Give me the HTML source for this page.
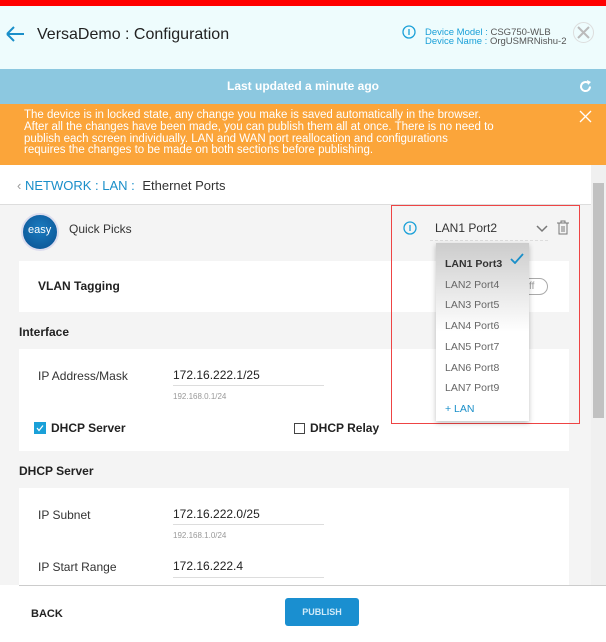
<!DOCTYPE html>
<html><head><style>
*{margin:0;padding:0;box-sizing:border-box}
body{width:606px;height:642px;overflow:hidden;font-family:"Liberation Sans",sans-serif;background:#fff;position:relative}
.a{position:absolute}
</style></head><body>
<div class="a" style="left:0;top:0;width:606px;height:6px;background:#f00"></div>
<div class="a" style="left:0;top:6px;width:606px;height:63px;background:#eefcfd"></div>
<svg class="a" style="left:5px;top:26px" width="20" height="16"><path d="M2 8H19M2 8L9 1M2 8L9 15" stroke="#1a8fc9" stroke-width="2" fill="none"/></svg>
<div class="a" style="left:37px;top:26px;font-size:16px;color:#222">VersaDemo : Configuration</div>
<svg class="a" style="left:402px;top:25px" width="14" height="14"><circle cx="7" cy="7" r="6" stroke="#1aa0d8" stroke-width="1.3" fill="none"/><path d="M7 4V10" stroke="#1aa0d8" stroke-width="1.3"/></svg>
<div class="a" style="left:425px;top:28px;font-size:9.5px;line-height:9px;color:#1aa0d8">Device Model : <span style="color:#555">CSG750-WLB</span><br>Device Name : <span style="color:#555">OrgUSMRNishu-2</span></div>
<div class="a" style="left:573px;top:22px;width:21px;height:21px;border-radius:50%;border:1px solid #ddd"></div>
<svg class="a" style="left:576px;top:25px" width="15" height="15"><path d="M2 2L13 13M13 2L2 13" stroke="#bbb" stroke-width="2"/></svg>
<div class="a" style="left:0;top:69px;width:606px;height:35px;background:#8cc8e0;color:#fff;font-size:12px;font-weight:bold;text-align:center;line-height:35px">Last updated a minute ago</div>
<svg class="a" style="left:578px;top:79px" width="15" height="15"><path d="M12 7.5A4.5 4.5 0 1 1 10 3.8" stroke="#fff" stroke-width="2" fill="none"/><path d="M9 1L13 3L10 6Z" fill="#fff"/></svg>
<div class="a" style="left:0;top:104px;width:606px;height:61px;background:#fba53a"></div>
<div class="a" style="left:24px;top:110px;font-size:11.5px;line-height:11.8px;color:#fff;white-space:nowrap">The device is in locked state, any change you make is saved automatically in the browser.<br>After all the changes have been made, you can publish them all at once. There is no need to<br>publish each screen individually. LAN and WAN port reallocation and configurations<br>requires the changes to be made on both sections before publishing.</div>
<svg class="a" style="left:579px;top:110px" width="13" height="13"><path d="M1 1L12 12M12 1L1 12" stroke="#fff" stroke-width="1.3"/></svg>
<div class="a" style="left:17px;top:178px;font-size:13px;color:#1a8fc9"><span style="color:#999">‹</span> NETWORK : LAN : <span style="color:#333;margin-left:4px">Ethernet Ports</span></div>
<div class="a" style="left:0;top:204px;width:591px;height:381px;background:#f4f4f4;border-top:1px solid #ddd"></div>
<div class="a" style="left:591px;top:165px;width:15px;height:420px;background:#f0f0f0"></div>
<div class="a" style="left:593px;top:183px;width:11px;height:235px;background:#c1c1c1"></div>
<div class="a" style="left:21px;top:213px;width:38px;height:38px;border-radius:50%;background:radial-gradient(circle at 50% 40%,#1a7cc0,#0a4f8f);border:2px solid #dde"></div>
<div class="a" style="left:28px;top:224px;font-size:11px;color:#fff">easy</div>
<div class="a" style="left:69px;top:222px;font-size:12px;color:#333">Quick Picks</div>
<div class="a" style="left:19px;top:261px;width:550px;height:51px;background:#fff"></div>
<div class="a" style="left:38px;top:279px;font-size:12px;font-weight:bold;color:#222">VLAN Tagging</div>
<div class="a" style="left:510px;top:278px;width:38px;height:17px;border:1px solid #aaa;border-radius:9px;font-size:10px;color:#999;padding-left:18px;line-height:15px">ff</div>
<div class="a" style="left:19px;top:325px;font-size:12px;font-weight:bold;color:#222">Interface</div>
<div class="a" style="left:19px;top:349px;width:550px;height:102px;background:#fff"></div>
<div class="a" style="left:38px;top:369px;font-size:12px;color:#333">IP Address/Mask</div>
<div class="a" style="left:173px;top:368px;font-size:12px;color:#222;width:151px;border-bottom:1px solid #ddd;padding-bottom:3px">172.16.222.1/25</div>
<div class="a" style="left:173px;top:392px;font-size:8px;color:#999">192.168.0.1/24</div>
<div class="a" style="left:34px;top:422px;width:12px;height:12px;background:#1aa0d8"></div>
<svg class="a" style="left:34px;top:422px" width="12" height="12"><path d="M3 6L5 8.5L9 3.5" stroke="#fff" stroke-width="1.2" fill="none"/></svg>
<div class="a" style="left:51px;top:421px;font-size:12px;font-weight:bold;color:#222">DHCP Server</div>
<div class="a" style="left:294px;top:423px;width:11px;height:11px;border:1px solid #444"></div>
<div class="a" style="left:310px;top:421px;font-size:12px;font-weight:bold;color:#222">DHCP Relay</div>
<div class="a" style="left:19px;top:464px;font-size:12px;font-weight:bold;color:#222">DHCP Server</div>
<div class="a" style="left:19px;top:488px;width:550px;height:97px;background:#fff"></div>
<div class="a" style="left:38px;top:508px;font-size:12px;color:#333">IP Subnet</div>
<div class="a" style="left:173px;top:507px;font-size:12px;color:#222;width:151px;border-bottom:1px solid #ddd;padding-bottom:3px">172.16.222.0/25</div>
<div class="a" style="left:173px;top:531px;font-size:8px;color:#999">192.168.1.0/24</div>
<div class="a" style="left:38px;top:560px;font-size:12px;color:#333">IP Start Range</div>
<div class="a" style="left:173px;top:559px;font-size:12px;color:#222;width:151px;border-bottom:1px solid #ddd;padding-bottom:4px">172.16.222.4</div>
<div class="a" style="left:19px;top:585px;width:587px;height:1px;background:#ccc"></div>
<div class="a" style="left:31px;top:608px;font-size:11px;font-weight:bold;color:#222">BACK</div>
<div class="a" style="left:285px;top:598px;width:74px;height:28px;background:#1a8fd0;border-radius:3px;color:#cfeaf8;font-size:9px;font-weight:bold;text-align:center;line-height:28px">PUBLISH</div>
<div class="a" style="left:391px;top:205px;width:189px;height:219px;border:1px solid #ee4444"></div>
<svg class="a" style="left:403px;top:221px" width="14" height="14"><circle cx="7" cy="7" r="6" stroke="#1aa0d8" stroke-width="1.3" fill="none"/><path d="M7 4V10" stroke="#1aa0d8" stroke-width="1.3"/></svg>
<div class="a" style="left:435px;top:221px;font-size:12px;color:#333">LAN1 Port2</div>
<div class="a" style="left:430px;top:240px;width:118px;border-bottom:1px dashed #ddd"></div>
<svg class="a" style="left:536px;top:225px" width="12" height="8"><path d="M1 1L6 6L11 1" stroke="#777" stroke-width="1.5" fill="none"/></svg>
<svg class="a" style="left:556px;top:220px" width="14" height="15"><path d="M1 3H13M5 3V1H9V3M3 3V14H11V3M6 6V12M8 6V12" stroke="#777" stroke-width="1" fill="none"/></svg>
<div class="a" style="left:436px;top:243px;width:93px;height:178px;background:linear-gradient(#ccc,#fff 50%);box-shadow:0 2px 5px rgba(0,0,0,.25)"></div>
<div class="a" style="left:445px;top:254px;font-size:10.5px;line-height:20.7px;color:#666">
<div style="color:#333;font-weight:bold">LAN1 Port3</div><div>LAN2 Port4</div><div>LAN3 Port5</div><div>LAN4 Port6</div><div>LAN5 Port7</div><div>LAN6 Port8</div><div>LAN7 Port9</div><div style="color:#1a8fc9">+ LAN</div></div>
<svg class="a" style="left:510px;top:253px" width="14" height="11"><path d="M1 6L5 10L13 1" stroke="#1a8fc9" stroke-width="1.8" fill="none"/></svg>
</body></html>
